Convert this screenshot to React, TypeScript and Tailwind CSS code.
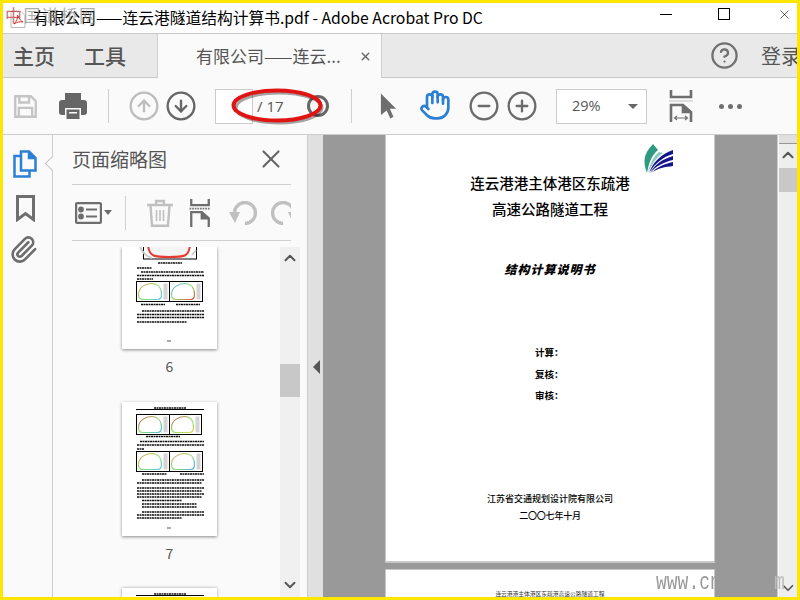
import React, { useId } from 'react';
import { CircleArrowUp, CircleArrowDown, CircleMinus, CirclePlus, Hand, ChevronUp, ChevronDown, X, Paperclip, CircleHelp } from 'lucide-react';

const cjk = "font-['Noto_Sans_CJK_SC','Noto_Sans',sans-serif]";

const Lines = ({ rows }: { rows: [number, number, number][] }) => (
  <>
    {rows.map(([x1, x2, y], i) => (
      <line key={i} x1={x1} x2={x2} y1={y} y2={y} stroke="#111" strokeWidth="1.300" strokeDasharray="2 .5" />
    ))}
  </>
);

const Arch = ({ x, y, w, h, c1, c2 }: { x: number; y: number; w: number; h: number; c1: string; c2: string }) => {
  const id = useId();
  const r = x + w - 8;
  const b = y + h - 2;
  return (
    <g>
      <defs>
        <linearGradient id={id} x1="0" x2="1" y1="0" y2="1">
          <stop offset="0" stopColor={c1} />
          <stop offset=".5" stopColor="#8fe06a" />
          <stop offset="1" stopColor={c2} />
        </linearGradient>
      </defs>
      <rect x={x} y={y} width={w} height={h} fill="#fff" stroke="#000" strokeWidth="1" />
      <rect x={x + w - 6} y={y + 2} width={4} height={h - 4} fill="#d4d4d4" />
      <path
        d={`M${x + 2} ${b - 5} C${x + 2} ${y + 6} ${x + 9} ${y + 2} ${x + 15} ${y + 2} C${x + 21} ${y + 2} ${r} ${y + 6} ${r} ${b - 5} Q${r} ${b} ${r - 4} ${b} H${x + 6} Q${x + 2} ${b} ${x + 2} ${b - 5}Z`}
        fill="#fff"
        stroke={`url(#${id})`}
        strokeWidth="1.200"
      />
    </g>
  );
};

const Thumb6 = () => (
  <svg width="95" height="102" viewBox="0 0 95 102" className="block blur-[0.3px]">
    <rect x="21.500" y="-8" width="53" height="20" fill="#fff" stroke="#000" />
    <path d="M26 -2 C27 10 33 10 47 10 C62 10 67 10 68 -2" fill="#f4f4f4" stroke="#e63a32" strokeWidth="2" />
    <path d="M18 0 C22 8 26 10 30 11 M70 8 L74 3" stroke="#ccc" strokeWidth="2" fill="none" />
    <Lines rows={[[36, 60, 16], [15, 30, 21], [19, 82, 25], [15, 82, 28.500], [15, 31, 32]]} />
    <Arch x={14.500} y={34.500} w={33} h={20} c1="#e8a060" c2="#58c8e0" />
    <Arch x={47.500} y={34.500} w={33} h={20} c1="#6ab0e8" c2="#d05030" />
    <Lines rows={[[19, 43, 57.500], [54, 78, 57.500], [20, 82, 64], [15, 82, 67.500], [15, 82, 70.500], [15, 65, 75]]} />
    <line x1="45" x2="49" y1="94" y2="94" stroke="#555" />
  </svg>
);

const Thumb7 = () => (
  <svg width="95" height="134" viewBox="0 0 95 134" className="block blur-[0.3px]">
    <Lines rows={[[32, 64, 6]]} />
    <line x1="14" x2="82" y1="7.500" y2="7.500" stroke="#000" />
    <Arch x={14.500} y={12.500} w={33} h={20} c1="#e05050" c2="#50b8e0" />
    <Arch x={47.500} y={12.500} w={32} h={20} c1="#e05050" c2="#d8d84a" />
    <Lines rows={[[24, 58, 34.500], [18, 82, 39.500], [15, 82, 43], [15, 22, 47]]} />
    <Arch x={14.500} y={49.500} w={33} h={20} c1="#e8a060" c2="#58c8e0" />
    <Arch x={47.500} y={49.500} w={33} h={20} c1="#e8a080" c2="#50a8e8" />
    <Lines rows={[[20, 45, 72], [58, 82, 72], [20, 82, 78], [15, 80, 81], [15, 82, 86], [15, 80, 89], [15, 82, 92], [15, 80, 95], [20, 60, 98.500], [20, 75, 102], [20, 75, 105], [20, 82, 110], [15, 82, 113], [15, 60, 116]]} />
    <line x1="45" x2="49" y1="126" y2="126" stroke="#555" />
  </svg>
);

const Logo = () => (
  <svg width="30" height="30" viewBox="0 0 30 30" className="block">
    <path d="M4 29 C0 18 0 10 10 0 L15 6 C8 12 6 19 4 29Z" fill="#2f9a82" />
    <path d="M5 29 C7 19 11 12 16 8 L20 9 C13 14 9 20 5 29Z" fill="#8cccbc" />
    <path d="M6 29 C10 18 18 10 30 6 V10 C20 13 12 19 6 29Z" fill="#14148c" />
    <path d="M7 29 C12 20 20 15 30 12 V16 C21 18 13 22 7 29Z" fill="#14148c" />
    <path d="M8 29 C14 23 21 20 30 18 V22 C22 23 15 24 8 29Z" fill="#14148c" />
  </svg>
);

const FitIcon = ({ w = 24, h = 32, arrow = true }: { w?: number; h?: number; arrow?: boolean }) => (
  <svg width={w} height={h} viewBox="0 0 24 32" className="block" fill="none" stroke="#6e6e6e" strokeWidth="2.600">
    <path d="M2 0 V7 H22 V0" />
    <line x1="0" x2="24" y1="11" y2="11" stroke={arrow ? '#ddd' : '#777'} strokeWidth="2" strokeDasharray={arrow ? undefined : '2 1'} />
    <path d="M2 32 V15 H14 L22 22 V32" />
    <path d="M14 15 V22 H22" fill="#6e6e6e" />
    {arrow && <path d="M6 28 H18 M8 26 L5.500 28 L8 30 M16 26 L18.500 28 L16 30" strokeWidth="1.200" />}
  </svg>
);

const Rotate = ({ className }: { className: string }) => (
  <svg width="28" height="24" viewBox="0 0 28 24" className={className} fill="none">
    <path d="M16 22.500 A10.500 10.500 0 1 0 5.500 11" stroke="#c0c0c0" strokeWidth="3.400" />
    <path d="M0 11 H11 L6 22Z" fill="#c0c0c0" />
  </svg>
);

const Sep = ({ className }: { className: string }) => <div className={`w-px h-[34px] bg-[#cfcfcf] ${className}`} />;

const App = () => {
  return (
    <div className={`relative w-[800px] h-[600px] border-[3px] border-[#ffe600] bg-white overflow-hidden flex flex-col ${cjk}`}>
      {/* title bar */}
      <div className="h-[31px] shrink-0 border-b border-[#c8c8c8] flex items-center bg-white">
        <svg width="16" height="17" viewBox="0 0 16 17" className="ml-[7px] mt-[2px]">
          <path d="M1 .5 H11 L15 4.500 V16.500 H1Z" fill="#fff" stroke="#bbb" />
          <path d="M4 13 C7 10 8 6 7.500 4 C9 8 11 10 13 11 C10 10.500 7 11 4 13Z" fill="none" stroke="#d8362a" />
        </svg>
        <span className="ml-[7px] text-[15.750px] leading-[30px] text-black whitespace-nowrap font-['Noto_Sans_CJK_SC','Open_Sans',sans-serif]">有限公司——连云港隧道结构计算书.pdf - Adobe Acrobat Pro DC</span>
        <div className="ml-auto flex items-center">
          <div className="w-[12px] h-px bg-black mr-[46px] -mt-[8px]" />
          <div className="w-[12px] h-[12px] border border-black mr-[47px] -mt-[8px]" />
          <X size={15} strokeWidth={1} color="#000" className="mr-[5px] -mt-[8px]" />
        </div>
      </div>

      {/* tabs */}
      <div className="h-[44px] shrink-0 flex bg-[#e9e9e9] border-b border-[#c8c8c8]">
        <div className="w-[155px] flex items-center text-[#555] text-[21px] font-medium border-r border-[#cfcfcf]">
          <span className="ml-[10px]">主页</span>
          <span className="ml-[29px]">工具</span>
        </div>
        <div className="w-[224px] h-[44px] bg-[#fafafa] flex items-center text-[17px] text-[#555] whitespace-nowrap border-r border-[#cfcfcf]">
          <span className="ml-[38px]">有限公司——连云...</span>
          <X size={13} strokeWidth={2.600} color="#666" className="ml-[18px]" />
        </div>
        <div className="ml-auto flex items-center overflow-hidden">
          <CircleHelp size={29} strokeWidth={1.900} color="#707070" className="mr-[22px]" />
          <span className="w-[36px] text-[20px] text-[#555] whitespace-nowrap overflow-hidden">登录</span>
        </div>
      </div>

      {/* toolbar */}
      <div className="relative h-[57px] shrink-0 flex items-center bg-[#fafafa] border-b border-[#cccccc] text-[#555]">
        <svg width="25" height="25" viewBox="0 0 28 28" className="ml-[10px]" fill="none" stroke="#c4c4c4" strokeWidth="2.600">
          <path d="M2.500 2.500 H20 L25.500 8 V25.500 H2.500Z" />
          <path d="M7 2.500 V9.500 H18 V2.500 M6.500 25 V15.500 H21.500 V25" />
        </svg>
        <svg width="28" height="26" viewBox="0 0 28 26" className="ml-[21px]" fill="#666">
          <path d="M6 0 H22 V8 H6Z" />
          <path d="M3 7 H25 A3 3 0 0 1 28 10 V19 A3 3 0 0 1 25 22 H22 V15 H6 V22 H3 A3 3 0 0 1 0 19 V10 A3 3 0 0 1 3 7Z" />
          <path d="M7.500 16.500 H20.500 V26 H7.500Z M10 19 V20.500 H18 V19Z" fillRule="evenodd" />
        </svg>
        <Sep className="ml-[21px]" />
        <CircleArrowUp size={32} strokeWidth={1.750} color="#bdbdbd" className="ml-[19px]" />
        <CircleArrowDown size={32} strokeWidth={1.750} color="#666" className="ml-[5px]" />
        <div className="ml-[18px] w-[38px] h-[35px] border border-[#cccccc] bg-white flex items-center justify-center text-[15px] text-[#888] font-['Open_Sans',sans-serif]">1</div>
        <span className="ml-[4px] w-[46px] text-[15px] whitespace-nowrap font-['Open_Sans',sans-serif]">/ 17</span>
        <div className="ml-[4px] w-[22px] h-[22px] rounded-full border-[3px] border-[#666]" />
        <Sep className="ml-[22px]" />
        <svg width="17" height="27" viewBox="0 0 19 29" className="ml-[28px]" fill="#6e6e6e"><path d="M1 0 L18 17 H11 L15 26 L11.500 28 L7.500 19 L1 24Z" /></svg>
        <Hand size={32} strokeWidth={2} color="#2b7fd4" className="ml-[22px] -mt-[2px]" />
        <CircleMinus size={32} strokeWidth={1.750} color="#6b6b6b" className="ml-[17px]" />
        <CirclePlus size={32} strokeWidth={1.750} color="#6b6b6b" className="ml-[6px]" />
        <div className="ml-[18px] w-[91px] h-[35px] border border-[#cccccc] bg-white flex items-center text-[14.500px] font-['Open_Sans',sans-serif]">
          <span className="ml-[15px]">29%</span>
          <div className="ml-auto mr-[8px] w-0 h-0 border-x-[5px] border-x-transparent border-t-[5px] border-t-[#666]" />
        </div>
        <div className="ml-[22px]"><FitIcon /></div>
        <div className="ml-[26px] flex gap-[4px]">
          <div className="w-[5px] h-[5px] rounded-full bg-[#707070]" />
          <div className="w-[5px] h-[5px] rounded-full bg-[#707070]" />
          <div className="w-[5px] h-[5px] rounded-full bg-[#707070]" />
        </div>
        {/* red marker ellipse */}
        <svg width="100" height="44" viewBox="0 0 100 44" className="absolute left-[226px] top-[6px]" fill="none">
          <ellipse cx="50" cy="24" rx="43" ry="15" stroke="#000" strokeOpacity=".35" strokeWidth="3" />
          <ellipse cx="48" cy="21.500" rx="43.500" ry="15" stroke="#e11414" strokeWidth="4" />
        </svg>
      </div>

      {/* body */}
      <div className="flex-1 min-h-0 flex">
        {/* nav rail */}
        <div className="relative w-[50px] shrink-0 bg-[#fafafa] border-r border-[#cccccc] flex flex-col items-center">
          <svg width="24" height="28" viewBox="0 0 24 28" className="mt-[15px] -ml-[5px] shrink-0" fill="none" stroke="#2b7fd4" strokeWidth="2.500">
            <path d="M8 1.500 H16 L22.500 8 V20.500 H8Z" />
            <path d="M16 1.500 V8 H22.500" fill="#2b7fd4" />
            <path d="M8 6 H1.500 V26.500 H16.500 V20.500" />
          </svg>
          <svg width="19" height="27" viewBox="0 0 19 27" className="mt-[17px] -ml-[5px] shrink-0" fill="none" stroke="#6e6e6e" strokeWidth="3">
            <path d="M1.500 1.500 H17.500 V24.500 L9.500 18.500 L1.500 24.500Z" />
          </svg>
          <Paperclip size={29} strokeWidth={2.200} color="#6e6e6e" className="mt-[13px] -ml-[9px] shrink-0" />
          <div className="absolute right-[-6px] top-[23px] w-[11px] h-[11px] rotate-45 bg-[#fafafa] border-l border-b border-[#c4c4c4]" />
        </div>

        {/* thumbnails panel */}
        <div className="w-[254px] shrink-0 bg-[#fafafa] flex flex-col">
          <div className="h-[50px] shrink-0 ml-[19px] mr-[16px] border-b border-[#d0d0d0] flex items-center justify-between">
            <span className="text-[19px] text-[#555]">页面缩略图</span>
            <X size={30} strokeWidth={1.700} color="#666" className="mr-[5px] mt-[-2px]" />
          </div>
          <div className="h-[56px] shrink-0 ml-[19px] mr-[16px] border-b border-[#d0d0d0] flex items-center overflow-hidden">
            <svg width="27" height="22" viewBox="0 0 27 22" className="ml-[3px] shrink-0" fill="none" stroke="#6e6e6e" strokeWidth="2.200">
              <rect x="1.100" y="1.100" width="24.800" height="19.800" rx="1" />
              <path d="M11 7.500 H22 M11 14.500 H22" />
              <circle cx="6" cy="7.500" r="1.800" fill="#6e6e6e" />
              <circle cx="6" cy="14.500" r="1.800" fill="#6e6e6e" />
            </svg>
            <div className="ml-[2px] shrink-0 w-0 h-0 border-x-[4px] border-x-transparent border-t-[5px] border-t-[#6e6e6e]" />
            <div className="ml-[13px] shrink-0 w-px h-[34px] bg-[#d0d0d0]" />
            <svg width="26" height="28" viewBox="0 0 26 28" className="ml-[21px] shrink-0" fill="none" stroke="#c0c0c0" strokeWidth="2.400">
              <path d="M0 6 H26 M9 6 V2 H17 V6" />
              <path d="M3.500 6 L5 26.800 H21 L22.500 6" />
              <path d="M9.500 11 V22 M13 11 V22 M16.500 11 V22" strokeWidth="1.600" />
            </svg>
            <div className="ml-[16px] shrink-0"><FitIcon w={22} h={28} arrow={false} /></div>
            <Rotate className="ml-[18px] shrink-0" />
            <Rotate className="ml-[14px] shrink-0 -scale-x-100" />
          </div>
          <div className="flex-1 min-h-0 flex pt-[6px] overflow-hidden">
            <div className="w-[227px] shrink-0 flex flex-col items-center overflow-hidden pl-[6px]">
              <div className="bg-white shadow-[0_1px_3px_rgba(0,0,0,0.45)] shrink-0"><Thumb6 /></div>
              <span className="mt-[8px] h-[27px] shrink-0 text-[14px] leading-[18px] text-[#555]">6</span>
              <div className="mt-[18px] bg-white shadow-[0_1px_3px_rgba(0,0,0,0.45)] shrink-0"><Thumb7 /></div>
              <span className="mt-[8px] h-[27px] shrink-0 text-[14px] leading-[18px] text-[#555]">7</span>
              <div className="mt-[17px] bg-white shadow-[0_0_3px_rgba(0,0,0,0.35)] shrink-0">
                <svg width="95" height="134" viewBox="0 0 95 134" className="block blur-[0.3px]"><Lines rows={[[32, 64, 6]]} /><line x1="14" x2="82" y1="7.500" y2="7.500" stroke="#000" /></svg>
              </div>
            </div>
            <div className="w-[20px] shrink-0 bg-[#f0f0f0] flex flex-col items-center">
              <ChevronUp size={18} strokeWidth={2.600} color="#555" className="mt-[2px] shrink-0" />
              <div className="mt-[97px] w-[20px] h-[33px] bg-[#c8c8c8] shrink-0 -ml-[1px]" />
              <ChevronDown size={18} strokeWidth={2.600} color="#555" className="mt-[179px] shrink-0" />
            </div>
          </div>
        </div>

        {/* splitter */}
        <div className="w-[16px] shrink-0 bg-[#e0e0e0] border-l border-[#cccccc] flex flex-col items-center">
          <div className="mt-[225px] ml-[1px] w-0 h-0 border-y-[7px] border-y-transparent border-r-[7px] border-r-[#555]" />
        </div>

        {/* document view */}
        <div className="flex-1 min-w-0 bg-[#999999] flex flex-col items-center overflow-hidden gap-[6px] border-r border-[#cccccc]">
          <div className="w-[330px] h-[428px] shrink-0 bg-white border-x border-b-2 border-[#c8c8c8] flex flex-col items-center text-black">
            <div className="self-end mt-[9px] mr-[41px]"><Logo /></div>
            <div className="mt-[-4px] text-[14.500px] leading-[25px] font-medium whitespace-nowrap">连云港港主体港区东疏港</div>
            <div className="mt-[1px] text-[14.500px] leading-[25px] font-medium whitespace-nowrap">高速公路隧道工程</div>
            <div className="mt-[40px] text-[12px] leading-[16px] font-black italic tracking-[1px] whitespace-nowrap">结构计算说明书</div>
            <div className="mt-[68px] w-[44px] ml-[14px] flex flex-col gap-[7.500px] text-[9.500px] leading-[14px] font-bold whitespace-nowrap">
              <span>计算：</span>
              <span>复核：</span>
              <span>审核：</span>
            </div>
            <div className="mt-[90px] text-[9px] leading-[14px] font-medium whitespace-nowrap">江苏省交通规划设计院有限公司</div>
            <div className="mt-[3px] text-[9px] leading-[14px] font-medium tracking-[-.2px] whitespace-nowrap">二〇〇七年十月</div>
          </div>
          <div className="w-[330px] flex-1 bg-white border-x border-t border-[#c8c8c8] flex justify-center items-end">
            <span className="text-[5.750px] leading-[7px] text-[#333] whitespace-nowrap">连云港港主体港区东疏港高速公路隧道工程</span>
          </div>
        </div>

        {/* document scrollbar */}
        <div className="w-[19px] shrink-0 bg-[#eeeeee] flex flex-col items-center border-l border-[#fafafa]">
          <div className="w-full h-[9px] bg-[#e0e0e0] border-b border-[#999]" />
          <ChevronUp size={18} strokeWidth={2.600} color="#555" className="mt-[2px]" />
          <div className="mt-[4px] w-full h-[24px] bg-[#c8c8c8]" />
          <ChevronDown size={18} strokeWidth={2.200} color="#555" className="mt-auto" />
        </div>
      </div>

      {/* screenshot watermarks */}
      <div className="absolute left-[2px] top-[-1px] text-[17px] tracking-[1.500px] text-[#777777]/60 whitespace-nowrap"><span className="text-[#b03030]/70">中</span>国道桥网</div>
      <div className="absolute left-[653px] top-[567px] text-[18px] leading-[24px] text-[#999999] font-['Liberation_Mono',monospace] scale-y-[1.3] whitespace-nowrap">www.cn</div>
      <div className="absolute left-[771px] top-[567px] text-[18px] leading-[24px] text-[#bbbbbb] font-['Liberation_Mono',monospace] scale-y-[1.3]">m</div>
    </div>
  );
};

export default App;
